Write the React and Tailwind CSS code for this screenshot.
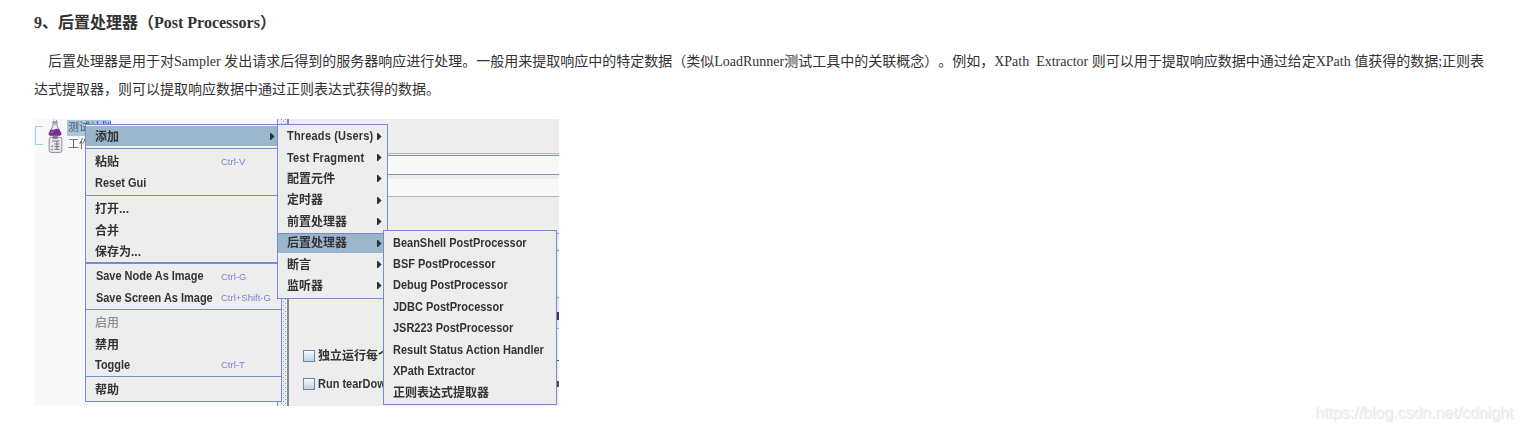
import React from 'react';

const mainGroups = [
  {
    box: 'h-[23px] pt-[1px]',
    items: [{ label: '添加', active: true, arrow: true, row: 'h-[21px] border-b border-[#f7f9fb]' }],
  },
  {
    box: 'h-[47px] pt-[2px] border-t border-[#758cd0]',
    items: [{ label: '粘贴', key: 'Ctrl-V' }, { label: 'Reset Gui' }],
  },
  {
    box: 'h-[67px] pt-[2px] border-t border-[#758cd0]',
    items: [{ label: '打开...' }, { label: '合并' }, { label: '保存为...' }],
  },
  {
    box: 'h-[47px] pt-[2px] border-t-2 border-[#758cd0]',
    items: [
      { label: 'Save Node As Image', key: 'Ctrl-G', text: 'pl-px' },
      { label: 'Save Screen As Image', key: 'Ctrl+Shift-G', text: 'pl-px' },
    ],
  },
  {
    box: 'h-[67px] pt-[2px] border-t border-[#758cd0]',
    items: [
      { label: '启用', disabled: true },
      { label: '禁用' },
      { label: 'Toggle', key: 'Ctrl-T' },
    ],
  },
  {
    box: 'h-[25px] pt-[2px] border-t border-[#758cd0]',
    items: [{ label: '帮助' }],
  },
];

const addItems = [
  { label: 'Threads (Users)', text: 'tracking-[0.2px]' },
  { label: 'Test Fragment', text: 'tracking-[0.2px]' },
  { label: '配置元件' },
  { label: '定时器' },
  { label: '前置处理器' },
  { label: '后置处理器', active: true },
  { label: '断言' },
  { label: '监听器' },
];

const postItems = [
  'BeanShell PostProcessor',
  'BSF PostProcessor',
  'Debug PostProcessor',
  'JDBC PostProcessor',
  'JSR223 PostProcessor',
  'Result Status Action Handler',
  'XPath Extractor',
  '正则表达式提取器',
];

const labelFont = "font-['Liberation_Sans','Noto_Sans_CJK_SC',sans-serif] whitespace-nowrap text-[12px]";

function isLatin(label) {
  return /[a-z]/.test(label);
}

function shapeOf(label) {
  return isLatin(label) ? 'origin-left scale-x-[0.915]' : '';
}

function Arrow() {
  return (
    <svg className="h-[7px] w-[5px] shrink-0" viewBox="0 0 5 7">
      <path d="M0 0H1L4.6 3.5L1 7H0Z" fill="#2e3338" />
    </svg>
  );
}

function MainItem({ item }) {
  return (
    <div
      className={`flex items-center pl-[9px] pr-[5px] ${item.row || 'h-[21.3px]'} ${item.active ? 'bg-[#9bb5ca]' : ''} ${item.disabled ? 'font-medium text-[#8c8c8c]' : 'font-bold text-[#333333]'}`}
    >
      <div className={`w-[126px] ${isLatin(item.label) ? 'pb-[2px]' : ''}`}>
        <span className={`inline-block align-middle leading-none ${labelFont} ${shapeOf(item.label)} ${item.text || ''}`}>
          {item.label}
        </span>
      </div>
      {item.key && (
        <span className="text-[9.5px] leading-none font-normal whitespace-nowrap text-[#7585cf]">{item.key}</span>
      )}
      {item.arrow && (
        <span className="ml-[49px] flex">
          <Arrow />
        </span>
      )}
    </div>
  );
}

function Flask() {
  return (
    <svg className="h-[17px] w-[14px]" viewBox="0 0 14 17">
      <path d="M5 3H9V7L13 14Q13.5 16.5 11.5 16.5H2.5Q.5 16.5 1 14L5 7Z" fill="#eee8f2" stroke="#83738e" strokeWidth=".9" />
      <path d="M3 10.2Q5 11.2 7 10.2T11 10.2L13 14Q13.5 16.5 11.5 16.5H2.5Q.5 16.5 1 14Z" fill="#7a2f9e" />
      <path d="M4.5 3H9.5M5.2 1H6.2M8 1.4H9M6 5H8" stroke="#8c8490" strokeWidth="1" />
      <path d="M3.4 14Q4 12.4 5.4 12.6" stroke="#b77bcb" strokeWidth="1.1" fill="none" />
    </svg>
  );
}

function Clipboard() {
  return (
    <svg className="h-[17px] w-[15px]" viewBox="0 0 15 17">
      <rect x="1.2" y="1.3" width="12.6" height="15.1" rx="2" fill="#eeeaf0" stroke="#9a86a6" />
      <rect x="4.5" y="0" width="5.5" height="3" rx="1" fill="#85818a" />
      <path d="M4 5H11.5M6.5 8H11.5M6.5 10.5H11.5M6.5 13.3H11.5M8.9 5V13.5" stroke="#77727b" strokeWidth="1" />
      <path d="M3 10.2L3.8 11.1L5 9.2M3 13.4L3.8 14.3L5 12.4" stroke="#42ae50" strokeWidth="1" fill="none" />
    </svg>
  );
}

function TreePane() {
  return (
    <div className="relative h-full w-[243px] shrink-0 bg-[#f8f8f8] text-[11px] leading-none text-[#555555]">
      <svg className="absolute top-[7px] left-0 h-[20px] w-[11px]" viewBox="0 0 11 20">
        <path d="M9 .5H1.5V18.5H9" fill="none" stroke="#a9cbe0" />
      </svg>
      <div className="flex h-[17px] items-center pl-[14px]">
        <Flask />
        <span className="ml-[5px] h-[16px] w-[44px] bg-[#a7c7e4] pt-[2px] pl-px whitespace-nowrap">测试计划</span>
      </div>
      <div className="flex h-[17px] items-center pl-[14px]">
        <Clipboard />
        <span className="ml-[5px] whitespace-nowrap">工作</span>
      </div>
    </div>
  );
}

function Check({ children }) {
  return (
    <div className="flex h-[28px] items-center pl-[13px]">
      <span className="h-[12px] w-[12px] shrink-0 border border-[#6f8797] bg-linear-to-b from-[#f5fafd] to-[#bcd3e6]" />
      <span className={`ml-[3px] font-bold text-[#333333] ${labelFont} ${shapeOf(children)}`}>{children}</span>
    </div>
  );
}

function EditorPane() {
  return (
    <div className="relative flex h-full flex-1 flex-col bg-[#ededed] text-[12px]">
      <div className="h-[35px] border-b border-[#b5b5b5]" />
      <div className="mt-px h-[20px] border-y border-[#7e98ad] bg-[#f8f8f8]" />
      <div className="mt-[4px] h-[18px] border-b border-[#b8b8b8] bg-[#f8f8f8]" />
      <div className="mt-[145px]">
        <Check>独立运行每个</Check>
        <Check>Run tearDow</Check>
      </div>
      <div className="absolute top-[114px] right-0 h-[18px] w-[2px] border-y border-[#8297bb]" />
      <div className="absolute top-[178px] right-0 h-[32px] w-[2px] border-y border-[#8fa6c9] bg-[#dce8f3]" />
      <div className="absolute top-[193px] right-0 h-[8px] w-[2px] bg-[#4a3045]" />
      <div className="absolute top-[241px] right-0 h-px w-[2px] bg-[#555555]" />
      <div className="absolute top-[262px] right-0 h-[6px] w-[2px] bg-[#55454a]" />
    </div>
  );
}

function Divider() {
  return (
    <svg className="h-full w-[13px] shrink-0" viewBox="0 0 13 287">
      <defs>
        <pattern id="grip" width="4" height="4" patternUnits="userSpaceOnUse">
          <path d="M0 0h1v1h-1zM2 2h1v1h-1z" fill="#8f9ba8" />
        </pattern>
      </defs>
      <rect width="13" height="287" fill="#ededed" />
      <rect x="0" width="1" height="287" fill="#7c90a4" />
      <rect x="4" width="6" height="287" fill="url(#grip)" />
      <rect x="10" width="2" height="287" fill="#7b8f9f" />
    </svg>
  );
}

function Screenshot() {
  return (
    <div className="h-[287px] w-[525px] overflow-hidden">
      <div className="relative h-full w-full font-['Liberation_Sans','Noto_Sans_CJK_SC',sans-serif] blur-[0.3px]">
        <div className="flex h-full">
          <TreePane />
          <Divider />
          <EditorPane />
        </div>

        <div className="absolute top-[5px] left-[51px] h-[278px] w-[197px] border border-[#758cd0] bg-[#ededed]">
          {mainGroups.map((group, i) => (
            <div key={i} className={group.box}>
              {group.items.map((item) => (
                <MainItem key={item.label} item={item} />
              ))}
            </div>
          ))}
        </div>

        <div className="absolute top-[5px] left-[243px] h-[175px] w-[111px] border border-[#758cd0] bg-[#ededed]">
          {addItems.map((item) => (
            <div key={item.label} className="flex h-[21.4px] items-center">
              <div
                className={`flex h-[20px] w-full items-center justify-between pr-[5px] pl-[9px] font-bold text-[#333333] ${item.active ? 'border-t border-[#758cd0] bg-[#9bb5ca]' : 'pt-px'}`}
              >
                <span className={`leading-none ${labelFont} ${shapeOf(item.label)} ${item.text || ''}`}>{item.label}</span>
                <span className="-ml-[12px] flex">
                  <Arrow />
                </span>
              </div>
            </div>
          ))}
        </div>

        <div className="absolute top-[111px] left-[349px] h-[175px] w-[174px] border border-[#758cd0] bg-[#ededed] pt-px">
          {postItems.map((label) => (
            <div
              key={label}
              className={`flex h-[21.4px] items-center pl-[9px] leading-none font-bold text-[#333333] ${labelFont}`}
            >
              <span className={isLatin(label) ? shapeOf(label) : 'pt-px'}>{label}</span>
            </div>
          ))}
        </div>
      </div>
    </div>
  );
}

export default function App() {
  return (
    <main className="flex h-[431px] flex-col overflow-hidden bg-white pl-[34px] font-['Liberation_Serif','Noto_Sans_CJK_SC',serif] text-[#333333] [text-spacing-trim:space-all]">
      <h4 className="mt-[11px] h-[24px] text-[16px] leading-[24px] font-bold whitespace-nowrap">
        9、后置处理器（Post Processors）
      </h4>
      <p className="mt-[13px] text-[14px] leading-[28px] whitespace-pre">
        <span className="block">
          {'\u00a0\u00a0\u00a0\u00a0后置处理器是用于对Sampler 发出请求后得到的服务器响应进行处理。一般用来提取响应中的特定数据（类似LoadRunner测试工具中的关联概念）。例如，XPath\u00a0 Extractor 则可以用于提取响应数据中通过给定XPath 值获得的数据;正则表'}
        </span>
        <span className="block">达式提取器，则可以提取响应数据中通过正则表达式获得的数据。</span>
      </p>
      <div className="mt-[15px] flex h-[302px] justify-between">
        <Screenshot />
        <span className="mr-[10px] self-end font-['Liberation_Sans',sans-serif] text-[15.9px] leading-none whitespace-nowrap text-[#f3f3f3] [text-shadow:1px_1px_0_#e6e6e6]">
          https://blog.csdn.net/cdnight
        </span>
      </div>
    </main>
  );
}
